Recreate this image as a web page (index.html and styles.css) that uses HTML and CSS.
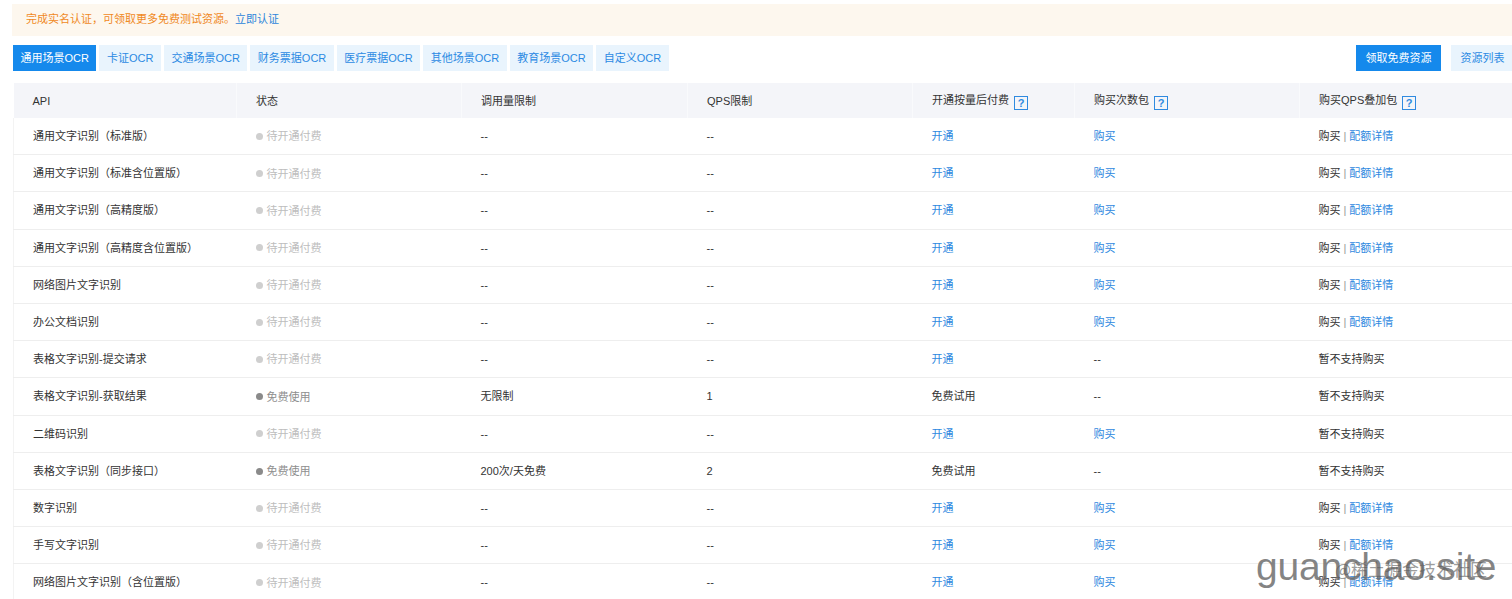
FILE: index.html
```html
<!DOCTYPE html>
<html lang="zh-CN">
<head>
<meta charset="utf-8">
<title>OCR 资源</title>
<link rel="stylesheet" href="styles.css">
</head>
<body>
<div class="page">
  <div class="alert">完成实名认证，可领取更多免费测试资源。<a class="alert-link">立即认证</a></div>

  <div class="toolbar">
    <div class="tabs">
      <span class="tab active">通用场景OCR</span>
      <span class="tab">卡证OCR</span>
      <span class="tab">交通场景OCR</span>
      <span class="tab">财务票据OCR</span>
      <span class="tab">医疗票据OCR</span>
      <span class="tab">其他场景OCR</span>
      <span class="tab">教育场景OCR</span>
      <span class="tab">自定义OCR</span>
    </div>
    <div class="actions">
      <span class="btn primary">领取免费资源</span>
      <span class="btn light">资源列表</span>
    </div>
  </div>

  <table class="grid">
    <colgroup>
      <col class="c1"><col class="c2"><col class="c3"><col class="c4"><col class="c5"><col class="c6"><col class="c7">
    </colgroup>
    <thead>
      <tr>
        <th>API</th>
        <th>状态</th>
        <th>调用量限制</th>
        <th>QPS限制</th>
        <th>开通按量后付费<span class="help">?</span></th>
        <th>购买次数包<span class="help">?</span></th>
        <th>购买QPS叠加包<span class="help">?</span></th>
      </tr>
    </thead>
    <tbody>
      <tr><td>通用文字识别（标准版）</td><td><span class="status off"><i></i>待开通付费</span></td><td>--</td><td>--</td><td><a class="lnk">开通</a></td><td><a class="lnk">购买</a></td><td>购买<span class="sep">|</span><a class="lnk">配额详情</a></td></tr>
      <tr><td>通用文字识别（标准含位置版）</td><td><span class="status off"><i></i>待开通付费</span></td><td>--</td><td>--</td><td><a class="lnk">开通</a></td><td><a class="lnk">购买</a></td><td>购买<span class="sep">|</span><a class="lnk">配额详情</a></td></tr>
      <tr><td>通用文字识别（高精度版）</td><td><span class="status off"><i></i>待开通付费</span></td><td>--</td><td>--</td><td><a class="lnk">开通</a></td><td><a class="lnk">购买</a></td><td>购买<span class="sep">|</span><a class="lnk">配额详情</a></td></tr>
      <tr><td>通用文字识别（高精度含位置版）</td><td><span class="status off"><i></i>待开通付费</span></td><td>--</td><td>--</td><td><a class="lnk">开通</a></td><td><a class="lnk">购买</a></td><td>购买<span class="sep">|</span><a class="lnk">配额详情</a></td></tr>
      <tr><td>网络图片文字识别</td><td><span class="status off"><i></i>待开通付费</span></td><td>--</td><td>--</td><td><a class="lnk">开通</a></td><td><a class="lnk">购买</a></td><td>购买<span class="sep">|</span><a class="lnk">配额详情</a></td></tr>
      <tr><td>办公文档识别</td><td><span class="status off"><i></i>待开通付费</span></td><td>--</td><td>--</td><td><a class="lnk">开通</a></td><td><a class="lnk">购买</a></td><td>购买<span class="sep">|</span><a class="lnk">配额详情</a></td></tr>
      <tr><td>表格文字识别-提交请求</td><td><span class="status off"><i></i>待开通付费</span></td><td>--</td><td>--</td><td><a class="lnk">开通</a></td><td>--</td><td>暂不支持购买</td></tr>
      <tr><td>表格文字识别-获取结果</td><td><span class="status free"><i></i>免费使用</span></td><td>无限制</td><td>1</td><td>免费试用</td><td>--</td><td>暂不支持购买</td></tr>
      <tr><td>二维码识别</td><td><span class="status off"><i></i>待开通付费</span></td><td>--</td><td>--</td><td><a class="lnk">开通</a></td><td><a class="lnk">购买</a></td><td>暂不支持购买</td></tr>
      <tr><td>表格文字识别（同步接口）</td><td><span class="status free"><i></i>免费使用</span></td><td>200次/天免费</td><td>2</td><td>免费试用</td><td>--</td><td>暂不支持购买</td></tr>
      <tr><td>数字识别</td><td><span class="status off"><i></i>待开通付费</span></td><td>--</td><td>--</td><td><a class="lnk">开通</a></td><td><a class="lnk">购买</a></td><td>购买<span class="sep">|</span><a class="lnk">配额详情</a></td></tr>
      <tr><td>手写文字识别</td><td><span class="status off"><i></i>待开通付费</span></td><td>--</td><td>--</td><td><a class="lnk">开通</a></td><td><a class="lnk">购买</a></td><td>购买<span class="sep">|</span><a class="lnk">配额详情</a></td></tr>
      <tr><td>网络图片文字识别（含位置版）</td><td><span class="status off"><i></i>待开通付费</span></td><td>--</td><td>--</td><td><a class="lnk">开通</a></td><td><a class="lnk">购买</a></td><td>购买<span class="sep">|</span><a class="lnk">配额详情</a></td></tr>
    </tbody>
  </table>
</div>
<div class="watermark">
  <span class="wm-site">guanchao.site</span>
  <span class="wm-juejin">@稀土掘金技术社区</span>
</div>
</body>
</html>
```

FILE: styles.css
```css
html, body {
  margin: 0;
  padding: 0;
  overflow: hidden;
  background: #fff;
}
body {
  font-family: "Liberation Sans", "Noto Sans CJK SC", sans-serif;
  font-size: 11px;
  color: #333;
  position: relative;
  height: 599px;
}
.page {
  width: 1501px;
  padding: 4px 0 0 13px;
}
.alert {
  height: 32px;
  line-height: 30px;
  margin-left: -1px;
  padding-left: 14px;
  background: #fdf7ee;
  color: #f0891e;
}
.alert-link {
  color: #2d86db;
}
.toolbar {
  display: flex;
  justify-content: space-between;
  margin-top: 9px;
  height: 26px;
}
.tabs {
  display: flex;
  gap: 3px;
}
.actions {
  display: flex;
  gap: 10px;
}
.tab, .btn {
  display: block;
  height: 26px;
  line-height: 26px;
  padding: 0 7.5px;
  background: #e9f4fd;
  color: #2c8ae3;
  white-space: nowrap;
}
.tab.active, .btn.primary {
  background: #1589ec;
  color: #fff;
}
.btn {
  padding: 0 9.5px;
}
.grid {
  margin-top: 12px;
  width: 1501px;
  border-collapse: collapse;
  table-layout: fixed;
}
.c1 { width: 223px; }
.c2 { width: 225px; }
.c3 { width: 226px; }
.c4 { width: 225px; }
.c5 { width: 162px; }
.c6 { width: 225px; }
.c7 { width: auto; }
.grid th {
  height: 35px;
  padding: 0 0 0 19px;
  text-align: left;
  font-weight: normal;
  line-height: 16px;
  background: #f4f5f9;
  border-right: 1px solid #f9fafc;
  color: #333;
  white-space: nowrap;
}
.grid td {
  height: 36.2px;
  padding: 0 0 0 19px;
  line-height: 16px;
  border-bottom: 1px solid #eeeeee;
  white-space: nowrap;
  color: #333;
}
.grid tbody tr td:first-child {
  border-left: 1px solid #f3f3f3;
}
.help {
  display: inline-block;
  vertical-align: -3px;
  width: 12px;
  height: 12px;
  margin-left: 5px;
  border: 1px solid #2f8ae0;
  color: #2f8ae0;
  font-family: "Liberation Sans", sans-serif;
  font-weight: bold;
  font-size: 11px;
  line-height: 12px;
  text-align: center;
}
.lnk {
  color: #2e88e0;
}
.sep {
  color: #999;
  margin: 0 3px;
}
.status {
  display: inline-flex;
  align-items: center;
  gap: 4px;
}
.status i {
  display: block;
  width: 7px;
  height: 7px;
  border-radius: 50%;
}
.status.off { color: #bdbdbd; }
.status.off i { background: #cfcfcf; }
.status.free { color: #8e8e8e; }
.status.free i { background: #8a8a8a; }

.watermark {
  position: absolute;
  left: 1256px;
  top: 544px;
  width: 256px;
  height: 55px;
  pointer-events: none;
}
.wm-site {
  position: absolute;
  left: 0;
  top: 0;
  font-family: "Liberation Sans", sans-serif;
  font-size: 39px;
  line-height: 45px;
  color: rgba(110, 110, 110, 0.85);
  letter-spacing: -0.2px;
}
.wm-juejin {
  position: absolute;
  left: 79px;
  top: 14px;
  font-family: "Noto Sans CJK SC", sans-serif;
  font-size: 17px;
  line-height: 22px;
  color: rgba(90, 90, 90, 0.6);
  white-space: nowrap;
}
```
